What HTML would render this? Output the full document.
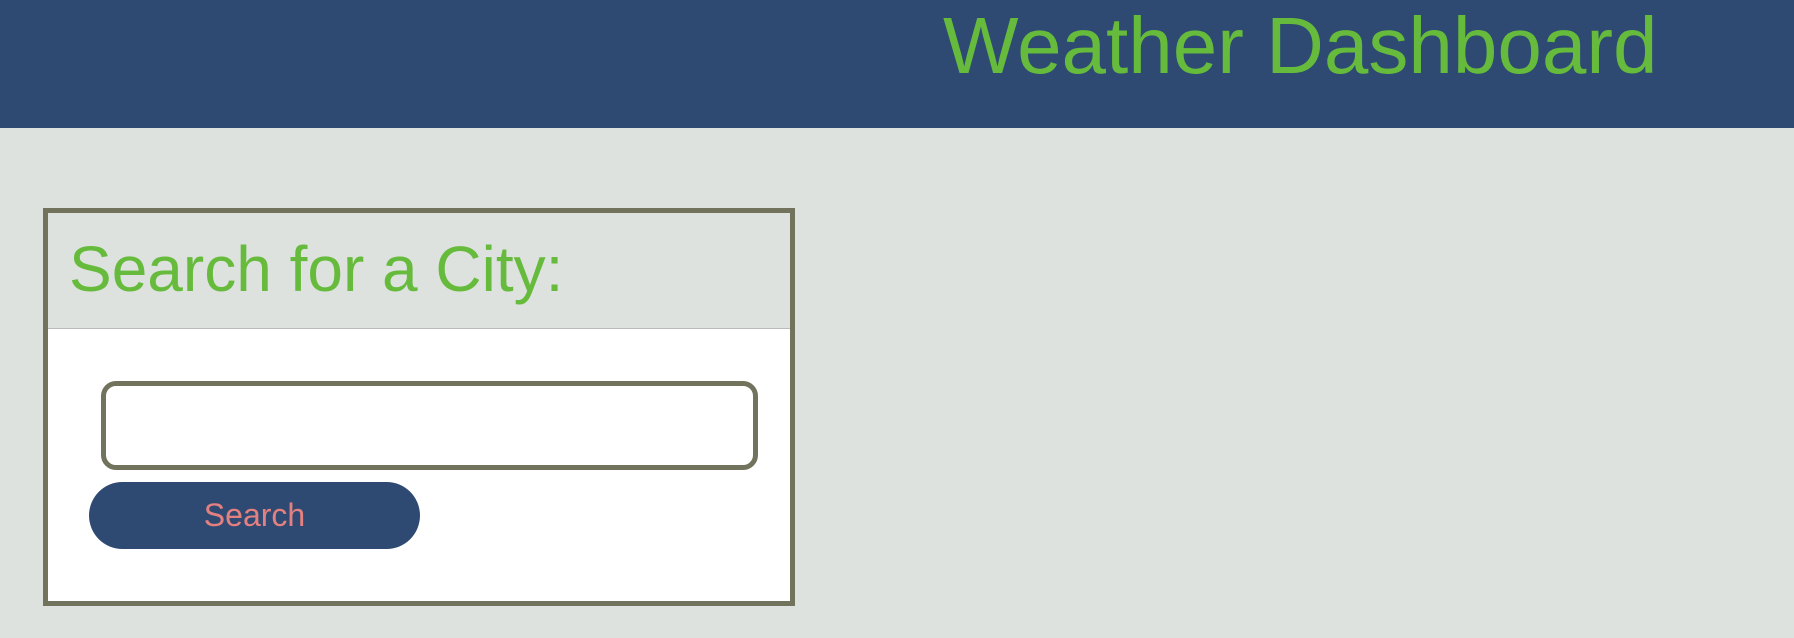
<!DOCTYPE html>
<html><head><meta charset="utf-8"><style>
html,body{margin:0;padding:0;width:1794px;height:638px;overflow:hidden;background:#dde2de;font-family:"Liberation Sans",Arial,sans-serif;}
.hdr{position:absolute;left:0;top:0;width:1794px;height:128px;background:#2e4a72;}
.hdr h1{position:absolute;left:943px;top:6px;margin:0;font-size:80px;line-height:80px;font-weight:normal;color:#66bb3c;white-space:nowrap;}
.card{position:absolute;left:43px;top:208px;width:742px;height:388px;border:5px solid #72735c;background:#fff;}
.ch{position:absolute;left:0;top:0;width:742px;height:115px;background:#dde2de;border-bottom:1px solid #b9bcb9;}
.ch span{position:absolute;left:21px;top:24px;font-size:64px;line-height:64px;color:#66bb3c;white-space:nowrap;}
.inp{position:absolute;left:53px;top:168px;width:647px;height:79px;border:5px solid #72735c;border-radius:15px;background:#fff;}
.btn{position:absolute;left:41px;top:269px;width:331px;height:67px;border-radius:34px;background:#2e4a72;color:#e58080;font-size:32px;line-height:67px;text-align:center;}
</style></head><body>
<div class="hdr"><h1>Weather Dashboard</h1></div>
<div class="card">
<div class="ch"><span>Search for a City:</span></div>
<div class="inp"></div>
<div class="btn">Search</div>
</div>
</body></html>
